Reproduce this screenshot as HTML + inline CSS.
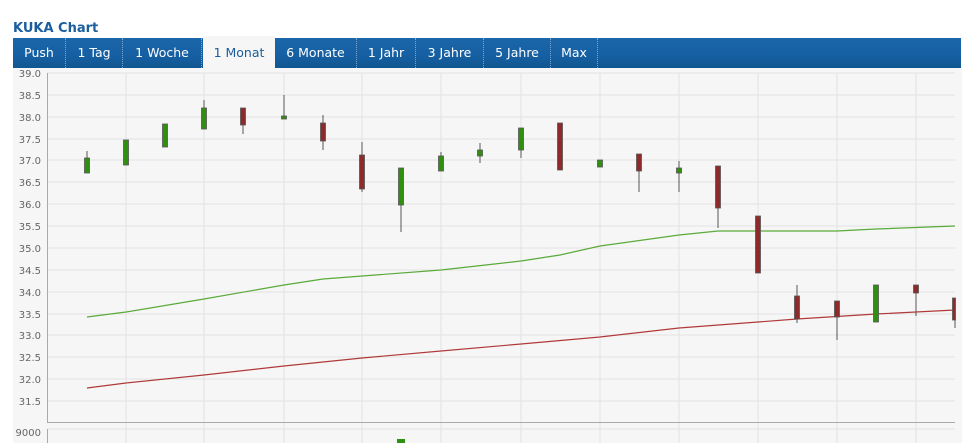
<!DOCTYPE html>
<html><head><meta charset="utf-8"><style>
body{margin:0;background:#fff;width:973px;height:443px;overflow:hidden;font-family:"DejaVu Sans","Liberation Sans",sans-serif;position:relative}
.t{position:absolute;left:13px;top:21px;font:bold 13px "DejaVu Sans",sans-serif;color:#1a5e9e}
.bar{position:absolute;left:13px;top:38px;width:948px;height:30px;background:linear-gradient(#1b66a9,#155fa2 60%,#11568f)}
.tab{position:absolute;top:0;height:30px;line-height:30px;color:#fff;font-size:12.5px;text-align:center;border-right:1px dotted #7fa6cc;box-sizing:border-box}
.act{background:#f6f6f6;color:#1a5e9e;top:-2px;height:32px;line-height:34px;border-right:none}
</style></head><body>
<div class="t">KUKA Chart</div>
<div class="bar">
<div class="tab" style="left:0;width:53px">Push</div>
<div class="tab" style="left:53px;width:57px">1 Tag</div>
<div class="tab" style="left:110px;width:79px">1 Woche</div>
<div class="tab act" style="left:190px;width:72px">1 Monat</div>
<div class="tab" style="left:262px;width:82px">6 Monate</div>
<div class="tab" style="left:344px;width:59px">1 Jahr</div>
<div class="tab" style="left:403px;width:68px">3 Jahre</div>
<div class="tab" style="left:471px;width:67px">5 Jahre</div>
<div class="tab" style="left:538px;width:47px">Max</div>
</div>
<svg style="position:absolute;left:0;top:0" width="973" height="443">
<rect x="13" y="68" width="949" height="375" fill="#f6f6f6"/>
<g stroke="#e2e2e2" stroke-width="1">
<line x1="47" x2="955" y1="73" y2="73"/><line x1="47" x2="955" y1="95" y2="95"/><line x1="47" x2="955" y1="117" y2="117"/><line x1="47" x2="955" y1="139" y2="139"/><line x1="47" x2="955" y1="160" y2="160"/><line x1="47" x2="955" y1="182" y2="182"/><line x1="47" x2="955" y1="204" y2="204"/><line x1="47" x2="955" y1="226" y2="226"/><line x1="47" x2="955" y1="248" y2="248"/><line x1="47" x2="955" y1="270" y2="270"/><line x1="47" x2="955" y1="292" y2="292"/><line x1="47" x2="955" y1="314" y2="314"/><line x1="47" x2="955" y1="335" y2="335"/><line x1="47" x2="955" y1="357" y2="357"/><line x1="47" x2="955" y1="379" y2="379"/><line x1="47" x2="955" y1="401" y2="401"/><line x1="47" x2="955" y1="429" y2="429"/>
<line x1="126" x2="126" y1="73" y2="443"/><line x1="204" x2="204" y1="73" y2="443"/><line x1="284" x2="284" y1="73" y2="443"/><line x1="362" x2="362" y1="73" y2="443"/><line x1="441" x2="441" y1="73" y2="443"/><line x1="521" x2="521" y1="73" y2="443"/><line x1="600" x2="600" y1="73" y2="443"/><line x1="679" x2="679" y1="73" y2="443"/><line x1="758" x2="758" y1="73" y2="443"/><line x1="837" x2="837" y1="73" y2="443"/><line x1="916" x2="916" y1="73" y2="443"/>
</g>
<g stroke="#aaa"><line x1="47.5" x2="47.5" y1="73" y2="422"/><line x1="47" x2="955" y1="422.5" y2="422.5"/><line x1="47.5" x2="47.5" y1="429" y2="443"/></g>
<g font-family="DejaVu Sans,sans-serif" font-size="10" fill="#666" text-anchor="end">
<text x="41" y="77">39.0</text><text x="41" y="99">38.5</text><text x="41" y="121">38.0</text><text x="41" y="143">37.5</text><text x="41" y="164">37.0</text><text x="41" y="186">36.5</text><text x="41" y="208">36.0</text><text x="41" y="230">35.5</text><text x="41" y="252">35.0</text><text x="41" y="274">34.5</text><text x="41" y="296">34.0</text><text x="41" y="318">33.5</text><text x="41" y="339">33.0</text><text x="41" y="361">32.5</text><text x="41" y="383">32.0</text><text x="41" y="405">31.5</text><text x="41" y="436">9000</text>
</g>
<polyline fill="none" stroke="#5aaa3a" stroke-width="1.2" points="87,317 126,312 204,299 284,285 323,279 441,270 521,261 560,255 600,246 679,235 718,231 758,231 837,231 876,229 955,226"/>
<polyline fill="none" stroke="#b03a3a" stroke-width="1.2" points="87,388 126,383 204,375 284,366 362,358 441,351 521,344 600,337 679,328 758,322 797,319 876,314 955,310"/>
<g stroke="#555" stroke-width="1">
<line x1="87" x2="87" y1="151" y2="173"/><line x1="204" x2="204" y1="100" y2="129"/><line x1="243" x2="243" y1="108" y2="134"/><line x1="284" x2="284" y1="95" y2="119"/><line x1="323" x2="323" y1="115" y2="150"/><line x1="362" x2="362" y1="142" y2="192"/><line x1="401" x2="401" y1="168" y2="232"/><line x1="441" x2="441" y1="152" y2="171"/><line x1="480" x2="480" y1="143" y2="163"/><line x1="521" x2="521" y1="128" y2="158"/><line x1="639" x2="639" y1="154" y2="192"/><line x1="679" x2="679" y1="161" y2="192"/><line x1="718" x2="718" y1="166" y2="228"/><line x1="797" x2="797" y1="285" y2="323"/><line x1="837" x2="837" y1="301" y2="340"/><line x1="916" x2="916" y1="285" y2="316"/><line x1="955" x2="955" y1="298" y2="328"/>
</g>
<g stroke="#555" stroke-width="0.8">
<rect x="84.5" y="158" width="5" height="15" fill="#2f8f0f"/><rect x="123.5" y="140" width="5" height="25" fill="#2f8f0f"/><rect x="162.5" y="124" width="5" height="23" fill="#2f8f0f"/><rect x="201.5" y="108" width="5" height="21" fill="#2f8f0f"/><rect x="240.5" y="108" width="5" height="17" fill="#8e2a2a"/><rect x="281.5" y="116" width="5" height="3" fill="#2f8f0f"/><rect x="320.5" y="123" width="5" height="18" fill="#8e2a2a"/><rect x="359.5" y="155" width="5" height="34" fill="#8e2a2a"/><rect x="398.5" y="168" width="5" height="37" fill="#2f8f0f"/><rect x="438.5" y="156" width="5" height="15" fill="#2f8f0f"/><rect x="477.5" y="150" width="5" height="6" fill="#2f8f0f"/><rect x="518.5" y="128" width="5" height="22" fill="#2f8f0f"/><rect x="557.5" y="123" width="5" height="47" fill="#8e2a2a"/><rect x="597.5" y="160" width="5" height="7" fill="#2f8f0f"/><rect x="636.5" y="154" width="5" height="17" fill="#8e2a2a"/><rect x="676.5" y="168" width="5" height="5" fill="#2f8f0f"/><rect x="715.5" y="166" width="5" height="42" fill="#8e2a2a"/><rect x="755.5" y="216" width="5" height="57" fill="#8e2a2a"/><rect x="794.5" y="296" width="5" height="23" fill="#8e2a2a"/><rect x="834.5" y="301" width="5" height="16" fill="#8e2a2a"/><rect x="873.5" y="285" width="5" height="37" fill="#2f8f0f"/><rect x="913.5" y="285" width="5" height="8" fill="#8e2a2a"/><rect x="952.5" y="298" width="3" height="22" fill="#8e2a2a"/>
</g>
<rect x="397" y="439" width="8" height="4" fill="#2f8f0f"/>
</svg>
</body></html>
